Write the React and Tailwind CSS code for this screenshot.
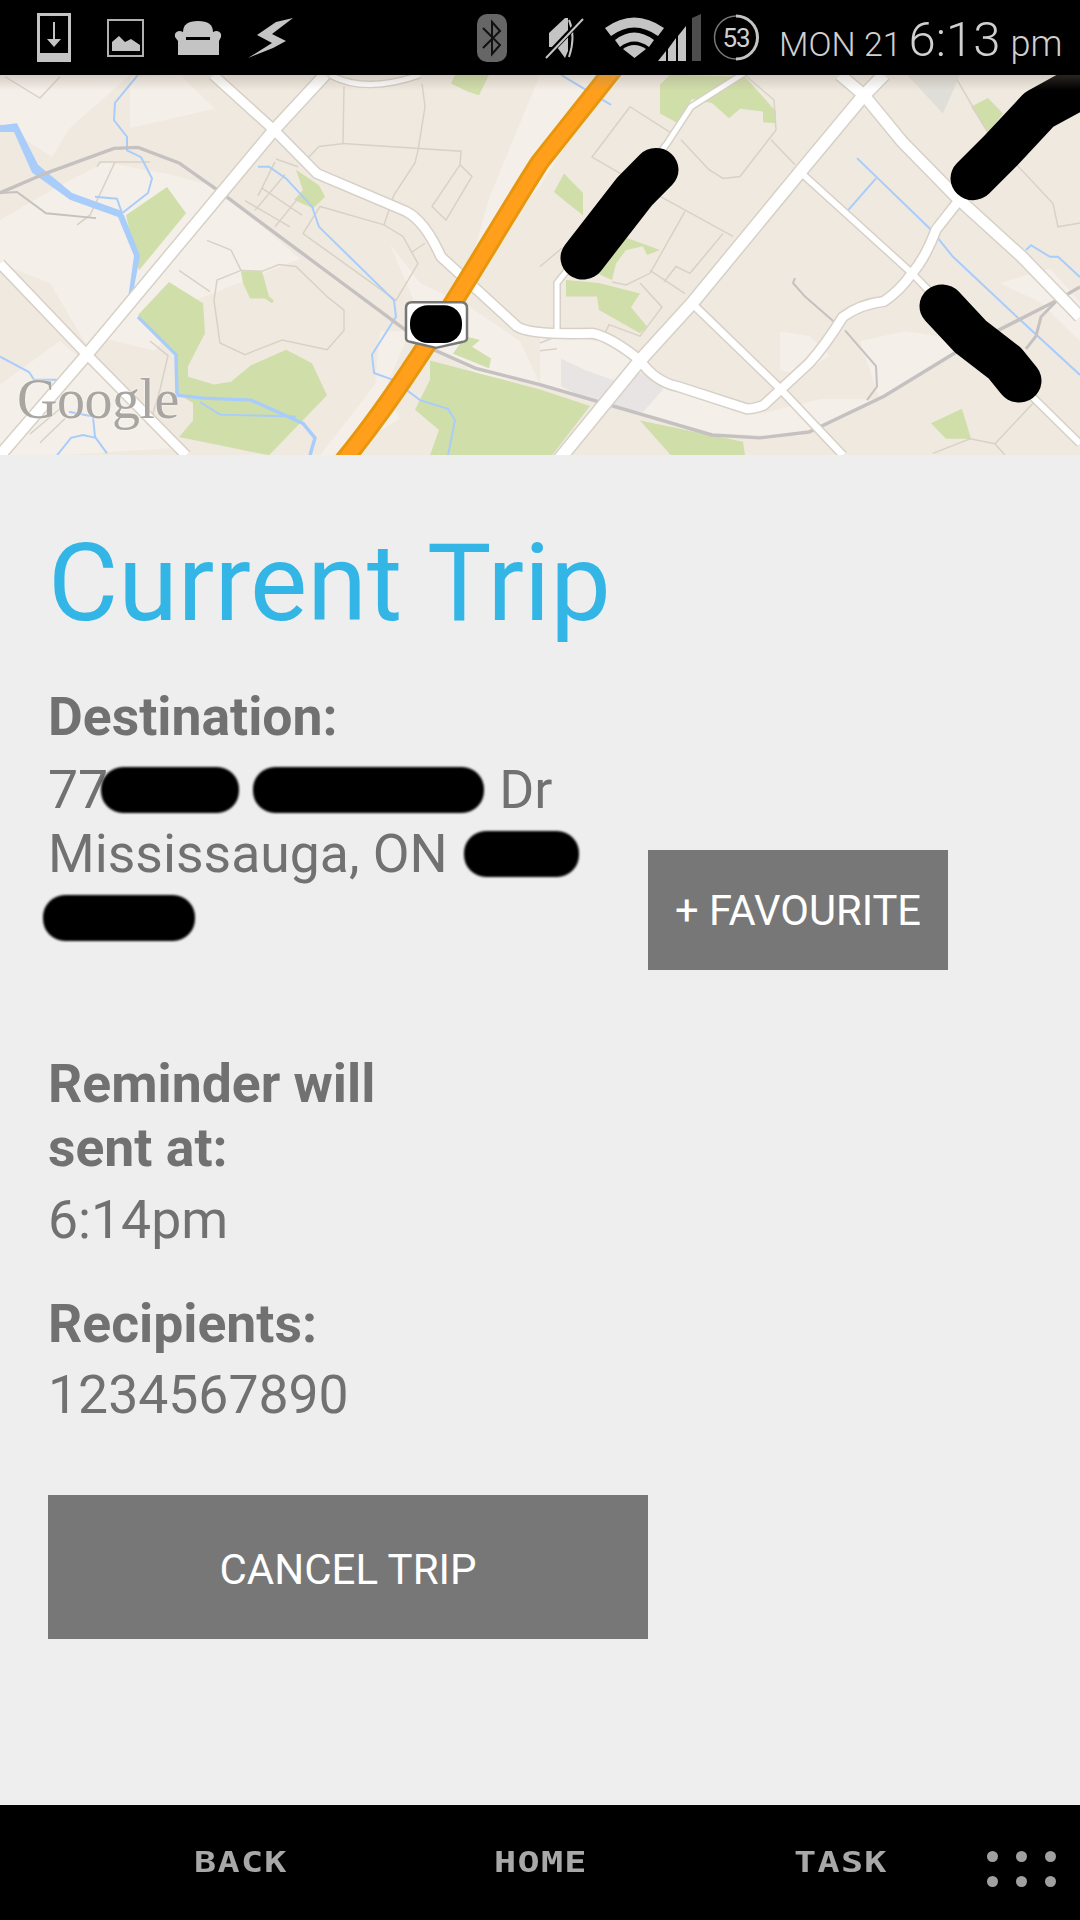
import React from 'react';

// map coords: x is full-size px, y is stretched a little, the viewBox squeezes it back
const LIGHT = [
  '0,75 130,75 70,130 52,160 0,125',
  '0,225 50,195 105,165 170,178 215,190 300,265 190,310 155,360 95,345 50,290 0,270',
  '130,78 180,75 215,110 130,130',
  '50,240 130,225 150,250 120,300 90,360 50,290',
  '0,395 60,350 100,385 180,460 60,468 0,468',
  '380,340 410,340 385,400 400,430 340,468 320,468 375,395',
  '390,250 420,290 470,315 520,350 540,395 480,385 435,360',
  '540,75 610,75 540,190 500,240 470,270 490,200',
  '540,345 600,350 680,400 760,425 820,410 880,410 860,350 905,340 970,350 880,410 800,448 700,445 540,395',
  '780,340 810,345 830,365 800,385 780,380',
  '1000,290 1050,275 1080,310 1080,350 1040,310',
];

const GREEN = [
  '126,220 167,191 186,218 139,277',
  '169,289 203,311 205,342 188,376 188,387 214,395 231,392 251,375 286,359 312,373 327,406 269,468 179,449 193,432 193,414 177,404 177,364 138,323',
  '241,278 262,278 269,304 274,308 272,311 265,306 250,306 243,290',
  '296,173 319,189 325,201 313,213 294,204 303,194',
  '465,345 480,349 472,356 491,368 489,378 453,363',
  '430,370 540,400 540,468 430,468 439,442 415,421 430,390',
  '455,75 489,75 479,96 467,92 451,84',
  '660,85 670,75 745,77 776,113 776,125 763,124 763,113 740,110 729,120 712,104 692,100 678,125 660,115',
  '554,196 564,177 583,197 583,220 568,208',
  '566,287 599,290 640,301 631,315 647,335 640,342 611,325 599,318 597,304 566,304',
  '971,108 988,99 1003,115 988,135',
  '931,435 962,420 971,451 946,451',
  '540,400 590,417 552,468 540,468',
  '640,432 743,454 745,468 671,468',
  '623,242 660,256 647,261 643,252 626,256 616,270 612,287 597,280',
];

const ROADS = [
  { d: 'M0 270L86 363L186 468', w: 9 },
  { d: 'M0 468L86 365L274 132L325 75', w: 11 },
  { d: 'M213 75L274 132L317 177L406 216Q425 226 441 263L517 335Q530 344 592 342Q610 345 640 370Q655 392 678 397L747 420Q755 420 764 416L809 373Q825 355 843 325Q860 312 884 309Q900 298 912 280Q925 265 936 235L958 206', w: 9 },
  { d: 'M557 475L640 370L692 311L802 173L864 96L884 75', w: 12 },
  { d: 'M840 75L864 96L902 144L958 203L1022 263L1080 325', w: 11 },
  { d: 'M802 177L912 280L1022 397L1080 456', w: 6 },
  { d: 'M692 311L778 397L843 468', w: 7 },
  { d: 'M746 72L691 108L667 146L580 260L557 290L557 339', w: 5 },
  { d: 'M330 75Q365 95 420 75', w: 5 },
];

const THIN = [
  'M344 87L343 146L461 154L460 168L432 211L446 225L472 180L460 168',
  'M308 161L319 149L344 146',
  'M422 84L425 108L418 153L415 166L394 199L384 230',
  'M303 239L320 211L384 230L403 242L418 270L396 308L303 239',
  'M412 258L425 249',
  'M214 308L217 287L241 277L262 278L279 271L296 273L327 304L344 318L344 339L327 359L282 349L245 364L220 352L214 308',
  'M207 246L231 256L241 277',
  'M179 277L210 299',
  'M5 77L40 99L60 77',
  'M630 108L592 160L661 201L733 242',
  'M630 108L671 135',
  'M681 142L709 173L723 182L740 180L776 132L774 101L747 77',
  'M771 142L795 168',
  'M685 216L650 280L626 292L612 289',
  'M723 239L690 280L676 273L664 289',
  'M650 277L685 301',
  'M640 290L662 315L640 345L609 333L605 342',
  'M540 273L562 254',
  'M957 80L988 135',
  'M1015 166L1053 208L1058 232L1080 228',
  'M1036 411L995 456',
  'M933 466L970 451L995 456L1005 468',
  'M540 352L557 345M540 360L557 358',
  'M77 230L90 220L115 165M150 165L100 165L97 170',
  'M276 162L298 170M258 200L275 165M285 178L255 215M245 205L290 232M262 192L302 220M275 232L300 200',
  'M150 435L160 400L168 365L150 350M30 446L60 420M40 455L65 430',
];

const WATER_THIN = [
  'M138 75L115 104L114 122L127 139L127 153L141 160L152 182L148 197L122 218',
  'M0 366L29 382L34 390L57 390',
  'M69 423L93 428L95 449L107 466',
  'M57 468L71 450L83 447L96 450',
  'M258 170L269 170L286 182L312 211L319 232L394 308L396 325L372 364L374 383L393 390L420 411L448 420L455 432L448 468',
  'M95 201L117 203L122 218',
  'M200 413L220 426L296 428',
  'M561 75L611 106',
  'M857 161L931 235L953 263L1019 327L1080 385',
  'M876 182L848 215',
  'M1026 256L1031 251L1050 263L1058 263L1080 284',
];

const GREY_LINES = [
  { d: 'M0 197L45 177L114 151L138 150L179 166L220 196L320 273L406 339L434 359L475 378L540 395L712 447L760 450L809 444L884 407L960 359L1057 308L1080 294', w: 3.5 },
  { d: 'M0 197L17 196L46 218L96 223', w: 2 },
  { d: 'M795 285L793 290L805 304L834 330M845 339L876 376L877 397L867 411', w: 2 },
  { d: 'M1057 308L1041 325L1036 345L1026 358', w: 3 },
];

const HIGHWAY = 'M340 478C415 385 480 262 540 165L616 66';

const MapView = () => (
  <div className="relative h-[380px] overflow-hidden bg-[#f0e9e0]">
    <svg className="block w-full h-full" viewBox="0 75.2 1080 392.5" preserveAspectRatio="none">
      <defs>
        <linearGradient id="topShade" x1="0" y1="0" x2="0" y2="1">
          <stop offset="0" stopColor="#8a7f70" stopOpacity="0.3" />
          <stop offset="1" stopColor="#8a7f70" stopOpacity="0" />
        </linearGradient>
      </defs>
      {LIGHT.map((p, i) => <polygon key={i} points={p} fill="#f5efe9" />)}
      {GREEN.map((p, i) => <polygon key={i} points={p} fill="#d0deaa" />)}
      <polygon points="561,368 585,380 612,390 654,380 663,400 643,423 609,420 561,397" fill="#e8e4e4" />
      <polygon points="907,75 960,75 943,115" fill="#e0ded8" />
      {THIN.map((d, i) => <path key={i} d={d} fill="none" stroke="#d8d2c6" strokeWidth="1.5" />)}
      {WATER_THIN.map((d, i) => <path key={i} d={d} fill="none" stroke="#a9cdfb" strokeWidth="2" />)}
      <polygon points="0,127 17,125 38,168 72,197 120,215 124,220 140,262 132,306 128,306 134,262 118,222 70,204 32,176 14,134 0,134" fill="#a9cdfb" />
      <path d="M138 325L176 364L177 406L203 409L251 411L303 435L315 450L310 468" fill="none" stroke="#a9cdfb" strokeWidth="3.5" />
      {GREY_LINES.map((l, i) => <path key={i} d={l.d} fill="none" stroke="#c4c1c0" strokeWidth={l.w} />)}
      {ROADS.map((r, i) => <path key={i} d={r.d} fill="none" stroke="#d6d0c6" strokeWidth={r.w + 3} />)}
      {ROADS.map((r, i) => <path key={i} d={r.d} fill="none" stroke="#ffffff" strokeWidth={r.w} />)}
      <path d={HIGHWAY} fill="none" stroke="#e8960c" strokeWidth="20" />
      <path d={HIGHWAY} fill="none" stroke="#ff9f1c" strokeWidth="14" />
      <path d="M406 316Q406 310 412 310L461 310Q467 310 467 316L467 347Q467 350 462 351L436 357L411 351Q406 350 406 347Z" fill="#ffffff" stroke="#777777" strokeWidth="2.5" />
      <rect x="410" y="313" width="52" height="39" rx="18" fill="#000000" />
      <g fill="none" stroke="#000000" strokeLinecap="round" strokeLinejoin="round" strokeWidth="45">
        <path d="M583 264L635 195L656 173" />
        <path d="M973 182L1001 153L1039 111L1090 82" />
        <path d="M942 314L970 345L1005 373L1019 391" />
      </g>
      <rect x="0" y="75" width="1080" height="16" fill="url(#topShade)" />
    </svg>
    <span className="absolute left-[17px] top-[292px] font-['Liberation_Serif',serif] text-[56px] leading-[64px] tracking-[-0.5px] text-[#a9a6a2] [text-shadow:0_0_2px_#ffffff]">Google</span>
  </div>
);

const StatusBar = () => (
  <div className="h-[75px] bg-black flex items-center text-[#d0d0d0] font-['Roboto',sans-serif]">
    <svg className="ml-[37px] w-[34px] h-[49px]" viewBox="0 0 34 49">
      <path d="M0 0H34V49H0Z M3 3V40H31V3Z" fill="#c4c4c4" fillRule="evenodd" />
      <path d="M17 9V27" stroke="#c4c4c4" strokeWidth="2" />
      <path d="M10 26H24L17 34Z" fill="#c4c4c4" />
    </svg>
    <svg className="ml-[36px] w-[37px] h-[38px]" viewBox="0 0 37 38">
      <path d="M0 0H37V38H0Z M2 2V36H35V2Z" fill="#b0b0b0" fillRule="evenodd" />
      <path d="M5 32V23L12 17L18 23L24 20L33 26V32Z" fill="#c4c4c4" />
    </svg>
    <svg className="ml-[30px] w-[48px] h-[36px]" viewBox="0 0 48 36">
      <path d="M9 12Q9 1 24 1Q39 1 39 12V17H9Z" fill="#c4c4c4" />
      <path d="M5 11Q10 11 12 16V20H36V16Q38 11 43 11Q48 12 47 17L45 21V35H4V21L1 17Q0 12 5 11Z" fill="#c4c4c4" />
    </svg>
    <svg className="ml-[26px] w-[45px] h-[41px] blur-[0.7px]" viewBox="0 0 45 41">
      <path d="M45 1L28 5L9 18L24 26L0 41L25 31L38 24L24 17Z" fill="#c4c4c4" />
    </svg>
    <svg className="ml-[184px] w-[30px] h-[48px]" viewBox="0 0 30 48">
      <rect width="30" height="48" rx="10" fill="#666666" />
      <path d="M6 14L23 31L15 40V8L23 17L6 34" fill="none" stroke="#111111" strokeWidth="2" />
    </svg>
    <svg className="ml-[38px] w-[39px] h-[42px]" viewBox="0 0 39 42">
      <path d="M4 16L20 1H23V34L20 41L12 30H4Z" fill="#c4c4c4" />
      <path d="M24 3Q31 20 24 40" fill="none" stroke="#c4c4c4" strokeWidth="2" />
      <path d="M0 41L37 2" stroke="#000000" strokeWidth="5" />
      <path d="M1 41L38 2" stroke="#c4c4c4" strokeWidth="2" />
    </svg>
    <svg className="ml-[21px] w-[59px] h-[41px]" viewBox="0 0 59 41">
      <path d="M0 11Q29 -10 59 11L53 19Q29 2 6 19Z" fill="#c4c4c4" />
      <path d="M10 23Q29 8 49 23L44 30Q29 19 15 30Z" fill="#c4c4c4" />
      <path d="M18 32Q29 24 41 32L29.5 41Z" fill="#c4c4c4" />
    </svg>
    <svg className="-ml-[6px] w-[43px] h-[47px]" viewBox="0 0 43 47">
      <path d="M0 47L8 37V47Z M10 47V35L18 24V47Z M20 47V22L28 12V47Z" fill="#c4c4c4" />
      <path d="M34 47V4L43 0V47Z" fill="#4d4d4d" />
    </svg>
    <div className="relative ml-[12px] w-[46px] h-[47px] flex items-center justify-center">
      <svg className="absolute inset-0" viewBox="0 0 46 47">
        <circle cx="23" cy="23.5" r="21.5" fill="none" stroke="#777777" strokeWidth="1.5" />
        <path d="M23 2A21.5 21.5 0 0 1 23 45" fill="none" stroke="#c4c4c4" strokeWidth="3" />
      </svg>
      <span className="text-[26px] leading-none tracking-[-1px]">53</span>
    </div>
    <span className="ml-[20px] text-[34px] font-light leading-none mt-[12px]">MON 21</span>
    <span className="ml-[7px] text-[49px] font-light leading-none mt-[4px]">6:13</span>
    <span className="ml-[10px] text-[36px] font-light leading-none mt-[13px]">pm</span>
  </div>
);

const NavLabel = ({ children }) => (
  <span className="w-[300px] shrink-0 mt-[39px] leading-[36px]">
    <span className="inline-block origin-left scale-x-[1.27]">{children}</span>
  </span>
);

const NavBar = () => (
  <div className="h-[115px] bg-black flex pl-[194px] font-['DejaVu_Sans_Mono',monospace] text-[29px] font-bold tracking-[1px] text-[#a8a8a8]">
    <NavLabel>BACK</NavLabel>
    <NavLabel>HOME</NavLabel>
    <NavLabel>TASK</NavLabel>
    <div className="-ml-[107px] mt-[46px] grid grid-cols-3 gap-x-[18px] gap-y-[14px] h-fit">
      {[0, 1, 2, 3, 4, 5].map((n) => (
        <span key={n} className="w-[11px] h-[11px] rounded-full bg-[#a0a0a0]" />
      ))}
    </div>
  </div>
);

const Smudge = ({ className }) => (
  <span className={`inline-block h-[46px] rounded-[22px] bg-black blur-[1px] align-[-5px] ${className}`} />
);

const Label = ({ children, className = '' }) => (
  <p className={`text-[53.5px] font-bold leading-[64px] ${className}`}>{children}</p>
);

const Value = ({ children, className = '' }) => (
  <p className={`text-[53.5px] leading-[64px] whitespace-nowrap ${className}`}>{children}</p>
);

export default function App() {
  return (
    <div className="w-[1080px] h-[1920px] flex flex-col bg-[#eeeeee] font-['Roboto',sans-serif] text-[#717171]">
      <StatusBar />
      <MapView />
      <main className="flex-1 pl-[48px]">
        <h1 className="mt-[66px] text-[108px] leading-[124px] text-[#33b5e5]">Current Trip</h1>
        <div className="flex mt-[40px]">
          <div className="w-[600px]">
            <Label>Destination:</Label>
            <Value className="mt-[9px]">
              77<Smudge className="w-[138px] -ml-[7px]" /><Smudge className="w-[231px] ml-[14px]" /><span className="ml-[15px]">Dr</span>
            </Value>
            <Value>
              Mississauga, ON<Smudge className="w-[115px] ml-[16px]" />
            </Value>
            <Value>
              <Smudge className="w-[152px] -ml-[5px]" />
            </Value>
          </div>
          <button className="mt-[165px] w-[300px] h-[120px] pt-[3px] bg-[#777777] text-white text-[41.7px]">+ FAVOURITE</button>
        </div>
        <Label className="mt-[82px] w-[340px]">Reminder will sent at:</Label>
        <Value className="mt-[8px]">6:14pm</Value>
        <Label className="mt-[40px]">Recipients:</Label>
        <Value className="mt-[7px]">1234567890</Value>
        <button className="mt-[68px] w-[600px] h-[144px] pt-[4px] bg-[#777777] text-white text-[42px]">CANCEL TRIP</button>
      </main>
      <NavBar />
    </div>
  );
}
